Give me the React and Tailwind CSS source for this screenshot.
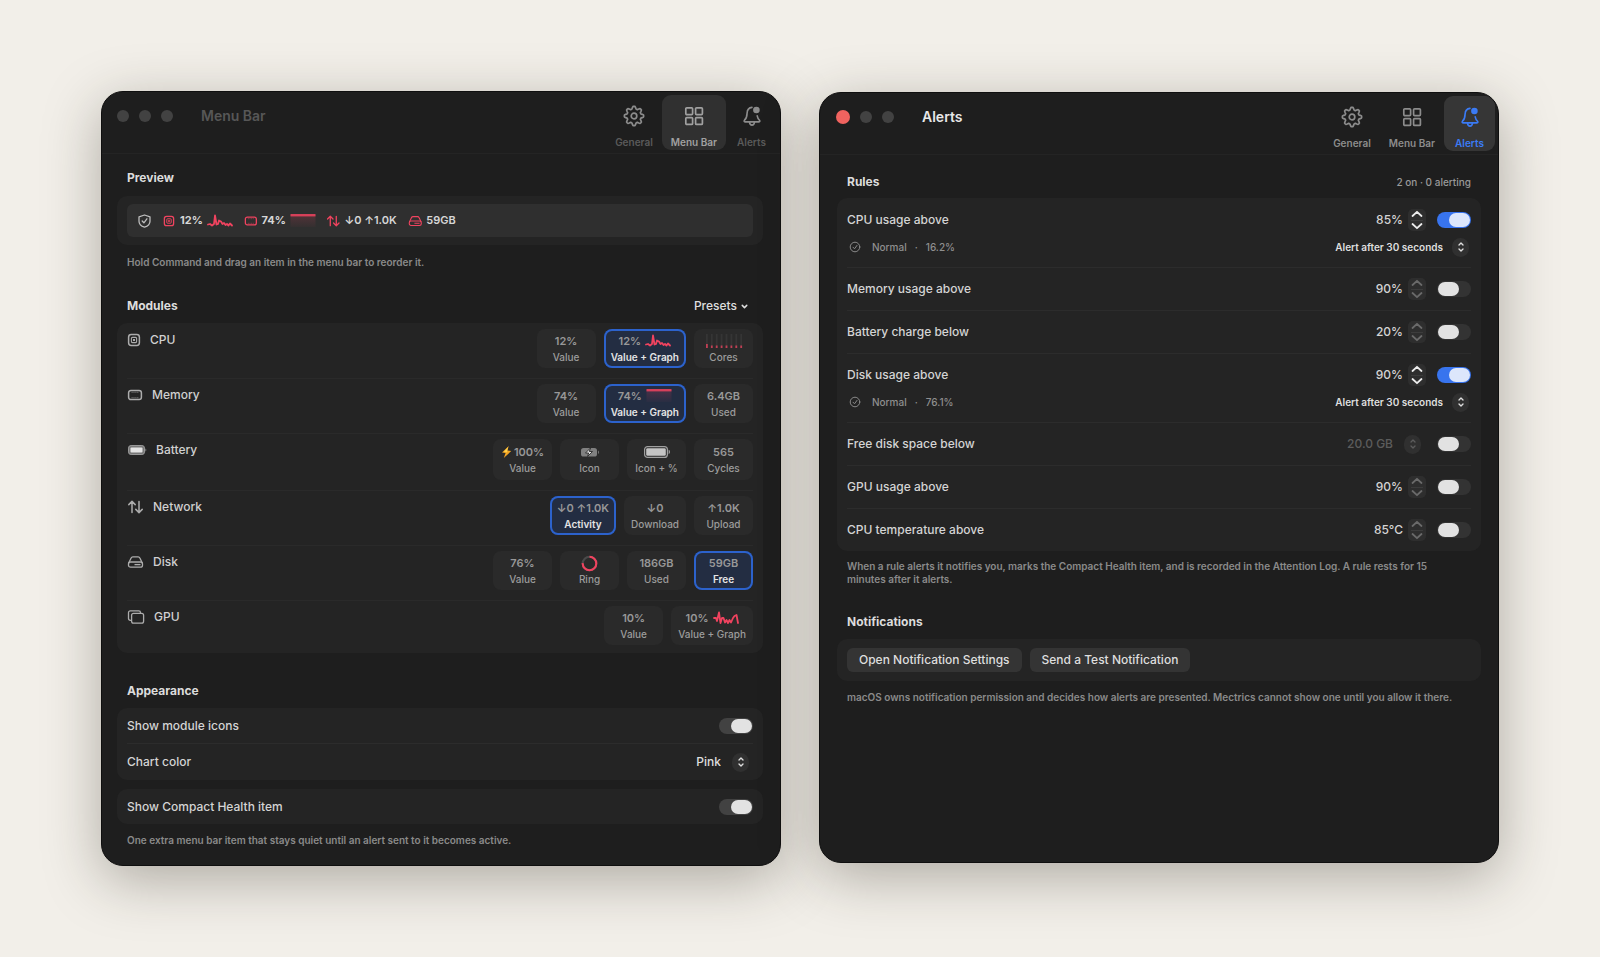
import React, { useState } from "react";
import { ChevronDown, ChevronUp } from "lucide-react";

const PINK = "#f0435f";

const MODULES = [
  {
    name: "CPU",
    icon: "cpu",
    selected: "Value + Graph",
    tiles: [
      { label: "Value", value: "12%" },
      { label: "Value + Graph", value: "12%", art: "spark" },
      { label: "Cores", art: "cores" },
    ],
  },
  {
    name: "Memory",
    icon: "memory",
    selected: "Value + Graph",
    tiles: [
      { label: "Value", value: "74%" },
      { label: "Value + Graph", value: "74%", art: "flat" },
      { label: "Used", value: "6.4GB" },
    ],
  },
  {
    name: "Battery",
    icon: "battery",
    tall: true,
    tiles: [
      { label: "Value", value: "100%", art: "bolt" },
      { label: "Icon", art: "charging" },
      { label: "Icon + %", art: "bigBattery" },
      { label: "Cycles", value: "565" },
    ],
  },
  {
    name: "Network",
    icon: "network",
    selected: "Activity",
    tiles: [
      { label: "Activity", value: "↓0 ↑1.0K" },
      { label: "Download", value: "↓0" },
      { label: "Upload", value: "↑1.0K" },
    ],
  },
  {
    name: "Disk",
    icon: "disk",
    selected: "Free",
    tiles: [
      { label: "Value", value: "76%" },
      { label: "Ring", art: "ring" },
      { label: "Used", value: "186GB" },
      { label: "Free", value: "59GB" },
    ],
  },
  {
    name: "GPU",
    icon: "gpu",
    tiles: [
      { label: "Value", value: "10%" },
      { label: "Value + Graph", value: "10%", art: "gpuSpark" },
    ],
  },
];

const RULES = [
  { name: "CPU usage above", value: "85%", on: true, status: "16.2%" },
  { name: "Memory usage above", value: "90%" },
  { name: "Battery charge below", value: "20%" },
  { name: "Disk usage above", value: "90%", on: true, status: "76.1%" },
  { name: "Free disk space below", value: "20.0 GB", popup: true },
  { name: "GPU usage above", value: "90%" },
  { name: "CPU temperature above", value: "85°C" },
];

/* ---------- icons ---------- */

function GearIcon() {
  const teeth = [];
  for (let i = 0; i < 64; i++) {
    const a = (i / 64) * Math.PI * 2;
    const r = 8.4 + 1.3 * Math.tanh(2.2 * Math.cos(a * 8));
    teeth.push(`${(11 + r * Math.sin(a)).toFixed(2)},${(11 - r * Math.cos(a)).toFixed(2)}`);
  }
  return (
    <svg width="22" height="22" viewBox="0 0 22 22" fill="none" stroke="currentColor" strokeWidth="1.7" strokeLinejoin="round">
      <polygon points={teeth.join(" ")} />
      <circle cx="11" cy="11" r="2.8" />
    </svg>
  );
}

function GridIcon() {
  return (
    <svg width="22" height="22" viewBox="0 0 22 22" fill="none" stroke="currentColor" strokeWidth="1.7">
      <rect x="2.8" y="2.8" width="6.8" height="6.8" rx="1" />
      <rect x="12.6" y="2.8" width="6.8" height="6.8" rx="1" />
      <rect x="2.8" y="12.6" width="6.8" height="6.8" rx="1" />
      <rect x="12.6" y="12.6" width="6.8" height="6.8" rx="1" />
    </svg>
  );
}

function BellIcon() {
  return (
    <svg width="22" height="22" viewBox="0 0 22 22" fill="none" stroke="currentColor" strokeWidth="1.6" strokeLinecap="round" strokeLinejoin="round">
      <path d="M11 2.4c-3 .3-4.8 2.6-4.9 5.7-.1 3.8-.7 5.3-2.6 7.1-.7.8-.4 1.7.5 1.7h14c.9 0 1.2-.9.5-1.7-1.3-1.3-2-2.5-2.3-4.3" />
      <path d="M8.5 17.2c.2 1.8 1.1 2.9 2.5 2.9s2.3-1.1 2.5-2.9" />
      <circle cx="15.4" cy="5" r="3.3" fill="currentColor" stroke="none" />
    </svg>
  );
}

const GLYPHS = {
  cpu: (
    <svg width="14" height="14" viewBox="0 0 14 14" fill="none" stroke="currentColor">
      <rect x="1.6" y="1.6" width="10.8" height="10.8" rx="2.6" strokeWidth="1.5" />
      <rect x="4.4" y="4.4" width="5.2" height="5.2" rx="1" strokeWidth="1.1" />
      <rect x="6" y="6" width="2" height="2" fill="currentColor" stroke="none" />
    </svg>
  ),
  memory: (
    <svg width="16" height="14" viewBox="0 0 16 14" fill="none" stroke="currentColor">
      <rect x="1.6" y="2.4" width="12.8" height="9.2" rx="2.3" strokeWidth="1.5" />
      <path d="M4.5 4.3h7M4.5 9.7h7" strokeWidth="1" strokeDasharray="1.2 0.7" strokeOpacity="0.6" />
    </svg>
  ),
  battery: (
    <svg width="20" height="14" viewBox="0 0 20 14" fill="none">
      <rect x="1.5" y="2.5" width="16" height="9" rx="2.6" fill="#777" stroke="#999" />
      <rect x="3.5" y="4.5" width="12" height="5" rx="1" fill="#e4e4e4" />
      <path d="M18.5 5.5c1 .5 1 2.5 0 3z" fill="#999" />
    </svg>
  ),
  network: (
    <svg width="17" height="14" viewBox="0 0 17 14" fill="none" stroke="currentColor" strokeWidth="1.5" strokeLinecap="round" strokeLinejoin="round">
      <path d="M5 12.5v-11M1.8 4.6 5 1.4l3.2 3.2M12 1.5v11M8.8 9.4l3.2 3.2 3.2-3.2" />
    </svg>
  ),
  disk: (
    <svg width="17" height="14" viewBox="0 0 17 14" fill="none" stroke="currentColor" strokeWidth="1.3" strokeLinejoin="round">
      <path d="M1.6 8.3 4 3.2c.4-.9 1-1.3 1.9-1.3h5.200c.9 0 1.5.4 1.9 1.3l2.4 5.1" />
      <rect x="1.5" y="7" width="14" height="5.2" rx="2" />
      <path d="M7.5 9.6h6" />
    </svg>
  ),
  gpu: (
    <svg width="18" height="14" viewBox="0 0 18 14" fill="none" stroke="currentColor" strokeWidth="1.3">
      <path d="M4.5 10.3H3.3c-1.1 0-1.8-.7-1.8-1.8V2.7c0-1.1.7-1.8 1.8-1.8h8.4c1.1 0 1.8.7 1.8 1.8v.5" />
      <rect x="4.6" y="3.3" width="12" height="9.8" rx="1.9" />
    </svg>
  ),
};

function Shield() {
  return (
    <svg width="13" height="14" viewBox="0 0 13 14" fill="none" stroke="#bcbcbc" strokeWidth="1.3" strokeLinecap="round" strokeLinejoin="round">
      <path d="M6.5 1 12 2.9v4.3c0 2.8-2.3 4.9-5.5 6-3.2-1.1-5.5-3.2-5.5-6V2.9z" />
      <path d="m4.2 7 1.7 1.8 3-4" />
    </svg>
  );
}

function Spark({ points }) {
  return (
    <svg width="26" height="14" viewBox="0 0 26 14" fill="none" stroke={PINK} strokeWidth="1.8" strokeLinecap="round" strokeLinejoin="round">
      <polyline points={points} />
    </svg>
  );
}

const ART = {
  spark: <Spark points="1,10.5 3,10 5,11.5 7,10 8,1.5 9.5,10.5 11,10 12,6.5 14,7.5 15.5,10 17,9 18.5,11 20,10 21.5,11.5 23,9.5 25,11.5" />,
  gpuSpark: <Spark points="1,7 3,7 4,10 6,1.5 7.5,12 9,7 10.5,7 12,11.5 13.5,9 15,12 16.5,9 18,11.5 20,7 21.5,5 23.5,4 25,12" />,
  flat: (
    <svg width="26" height="14" viewBox="0 0 26 14">
      <defs>
        <linearGradient id="flatFade" x1="0" y1="0" x2="0" y2="1">
          <stop offset="0" stopColor={PINK} stopOpacity="0.18" />
          <stop offset="1" stopColor={PINK} stopOpacity="0.03" />
        </linearGradient>
      </defs>
      <rect x="0.5" y="1" width="25" height="12" fill="url(#flatFade)" />
      <rect x="0.5" y="0" width="25" height="2.4" fill={PINK} fillOpacity="0.85" />
    </svg>
  ),
  cores: (
    <svg width="38" height="14" viewBox="0 0 38 14">
      {[0, 1, 2, 3, 4, 5, 6, 7].map((i) => (
        <g key={i}>
          <rect x={1 + i * 4.9} y="0" width="1.8" height="14" fill="#353535" />
          <rect x={1 + i * 4.9} y={i === 0 ? 10 : 11.5} width="1.8" height={i === 0 ? 4 : 2.5} fill={PINK} fillOpacity="0.75" />
        </g>
      ))}
    </svg>
  ),
  bolt: (
    <svg width="11" height="14" viewBox="0 0 11 14">
      <path d="M7.8 1 1 7.6l3.6.5L2.8 13l7.4-7-3.9-.6z" fill="#f5a623" />
      <path d="M7 2 2.8 6.8l3.2.4z" fill="#ffd34d" />
    </svg>
  ),
  charging: (
    <svg width="20" height="14" viewBox="0 0 20 14">
      <rect x="1" y="3" width="16" height="8.5" rx="2.6" fill="#808080" />
      <path d="M18 5.5c1.2.5 1.2 3 0 3.5z" fill="#808080" />
      <path d="M10.5 3 5.5 8h3.2L7.5 11.5l5-5H9.3z" fill="#e4e4e4" stroke="#2b2b2b" strokeWidth="0.9" />
    </svg>
  ),
  bigBattery: (
    <svg width="28" height="14" viewBox="0 0 28 14">
      <rect x="1.6" y="1.6" width="22.8" height="10.8" rx="3" fill="none" stroke="#a0a0a0" strokeWidth="1.2" />
      <rect x="3.2" y="3.2" width="19.6" height="7.6" rx="1.4" fill="#c4c4c4" />
      <path d="M25.6 4.8c1.8.6 1.8 3.8 0 4.4z" fill="#a0a0a0" />
    </svg>
  ),
  ring: (
    <svg width="17" height="17" viewBox="0 0 17 17" fill="none" strokeWidth="2.1">
      <circle cx="8.5" cy="8.5" r="6.8" stroke="#4a4a4a" />
      <circle cx="8.5" cy="8.5" r="6.8" stroke={PINK} pathLength="100" strokeDasharray="76 24" transform="rotate(-90 8.5 8.5)" />
    </svg>
  ),
};

function CheckCircle() {
  return (
    <svg width="12" height="12" viewBox="0 0 12 12" fill="none" stroke="#8a8a8a" strokeLinecap="round" strokeLinejoin="round">
      <circle cx="6" cy="6" r="4.8" />
      <path d="m4 6.2 1.5 1.6L8 4.4" />
    </svg>
  );
}

/* ---------- controls ---------- */

function Toggle({ label, defaultOn, tint }) {
  const [on, setOn] = useState(!!defaultOn);
  const track = on ? (tint ? "bg-[#3874ee]" : "bg-[#424242]") : "bg-[#333333]";
  const knob = on && tint ? "bg-[#dce6fb]" : "bg-[#e2e2e2]";
  return (
    <label className={`flex h-4 w-[34px] shrink-0 items-center rounded-full p-px ${track} ${on ? "justify-end" : "justify-start"}`}>
      <input
        type="checkbox"
        aria-label={label}
        checked={on}
        onChange={(e) => setOn(e.target.checked)}
        className="sr-only"
      />
      <span className={`h-[14px] w-[21px] rounded-full ${knob}`} />
    </label>
  );
}

function Popup({ label, value, small, dim }) {
  return (
    <label className={`relative flex items-center ${dim ? "text-[#5c5c5c]" : "text-[#dedede]"}`}>
      <select
        aria-label={label}
        disabled={dim}
        className={`appearance-none bg-transparent text-right opacity-100 outline-none ${
          small ? "pr-7 text-[10px] font-semibold" : "pr-8 text-[12px] font-medium"
        }`}
      >
        <option>{value}</option>
      </select>
      <span
        className={`pointer-events-none absolute flex h-[19px] w-[17px] flex-col items-center justify-center rounded-full bg-[#303030] ${
          small ? "right-[2px]" : "right-1"
        }`}
      >
        <ChevronUp className="-mb-px size-2" strokeWidth={4} />
        <ChevronDown className="-mt-px size-2" strokeWidth={4} />
      </span>
    </label>
  );
}

function Stepper({ name, active }) {
  return (
    <span
      className={`flex h-[22px] w-[18px] flex-col items-center justify-between rounded-[5px] bg-[#2e2e2e] ${
        active ? "text-[#ececec]" : "text-[#6a6a6a]"
      }`}
    >
      <button aria-label={`Increase ${name}`} className="flex h-[10px] items-center">
        <svg width="12" height="8" viewBox="0 0 12 8" fill="none" stroke="currentColor" strokeWidth="1.8" strokeLinecap="round" strokeLinejoin="round">
          <path d="m1.5 6 4.5-4.2L10.5 6" />
        </svg>
      </button>
      <span className="h-px w-3 bg-[#3c3c3c]" />
      <button aria-label={`Decrease ${name}`} className="flex h-[10px] items-center">
        <svg width="12" height="8" viewBox="0 0 12 8" fill="none" stroke="currentColor" strokeWidth="1.8" strokeLinecap="round" strokeLinejoin="round">
          <path d="m1.5 2 4.5 4.2L10.5 2" />
        </svg>
      </button>
    </span>
  );
}

/* ---------- window chrome ---------- */

const TABS = [
  { name: "General", Icon: GearIcon },
  { name: "Menu Bar", Icon: GridIcon },
  { name: "Alerts", Icon: BellIcon },
];

function Titlebar({ title, focused }) {
  const tabColor = (name) => {
    if (name === title) return focused ? "bg-[#363636] text-[#3b7bf5]" : "bg-[#303030] text-[#a0a0a0]";
    return "text-[#8c8c8c]";
  };
  return (
    <header className={`flex h-[62px] items-start border-b border-[#242424] pr-[3px] ${focused ? "pl-4" : "pl-[15px]"}`}>
      <div className="flex h-12 flex-1 items-center">
        <div className="flex items-center gap-[10px]">
          <button aria-label="Close" className={`rounded-full ${focused ? "size-[14px] bg-[#f0635f]" : "size-3 bg-[#424242]"}`} />
          <button aria-label="Minimize" className="size-3 rounded-full bg-[#424242]" />
          <button aria-label="Zoom" className="size-3 rounded-full bg-[#424242]" />
        </div>
        <h1 className={`ml-7 text-[14px] leading-5 font-semibold ${focused ? "text-[#e8e8e8]" : "text-[#575757]"}`}>{title}</h1>
      </div>
      <nav className="flex pt-[3px]">
        {TABS.map(({ name, Icon }) => (
          <button
            key={name}
            className={`flex h-[55px] min-w-[51px] flex-col items-center gap-[9px] rounded-[9px] px-[9px] pt-[10px] text-[10px] leading-3 font-semibold ${tabColor(name)}`}
          >
            <Icon />
            <span className={!focused && name !== title ? "text-[#5a5a5a]" : ""}>{name}</span>
          </button>
        ))}
      </nav>
    </header>
  );
}

function Window({ children, className }) {
  return (
    <section
      className={`min-w-0 flex-1 overflow-hidden rounded-[22px] border border-[#0f0f0f] bg-[#1e1e1e] shadow-[0_14px_56px_rgba(45,38,25,0.34)] ${className}`}
    >
      {children}
    </section>
  );
}

function Heading({ children }) {
  return <h2 className="text-[12px] leading-5 font-bold text-[#dcdcdc]">{children}</h2>;
}

function Caption({ children, className }) {
  return <p className={`pr-5 pl-[10px] text-[10px] leading-[13px] font-semibold text-[#8a8a8a] ${className}`}>{children}</p>;
}

/* ---------- menu bar window ---------- */

function Tile({ tile, selected, tall }) {
  return (
    <button
      aria-pressed={!!selected}
      className={`flex min-w-[59px] flex-col items-center rounded-lg px-[7px] ${tall ? "h-[41px] pt-[6px]" : "h-[39px] pt-[5px]"} ${
        selected ? "bg-[#232d42] ring-2 ring-[#2c62cc] ring-inset" : "bg-[#2a2a2a]"
      }`}
    >
      <span
        className={`flex h-[14px] items-center text-[11px] leading-[14px] font-semibold text-[#989898] ${
          tile.art === "bolt" ? "flex-row-reverse gap-[2px]" : "gap-1"
        }`}
      >
        {tile.value}
        {ART[tile.art]}
      </span>
      <span className={`mt-[3px] text-[10px] leading-3 ${selected ? "font-semibold text-[#e4e4e4]" : "font-medium text-[#9c9c9c]"}`}>
        {tile.label}
      </span>
    </button>
  );
}

function ModuleRow({ mod, first, last }) {
  const height = mod.tall ? "h-[57px]" : last ? "h-[53px]" : "h-[55px]";
  return (
    <div className={`flex justify-between ${height} ${first ? "pt-[6px]" : "border-t border-[#2a2a2a] pt-[5px]"}`}>
      <div className="flex h-[22px] items-center gap-[9px] text-[12px] leading-5 font-medium text-[#d0d0d0]">
        <span className="text-[#acacac]">{GLYPHS[mod.icon]}</span>
        {mod.name}
      </div>
      <div className="flex gap-2">
        {mod.tiles.map((t) => (
          <Tile key={t.label} tile={t} selected={t.label === mod.selected} tall={mod.tall} />
        ))}
      </div>
    </div>
  );
}

function PreviewGlyph({ name, className }) {
  return <span className={`text-[#f0435f] [&>svg]:h-3 [&>svg]:w-auto ${className}`}>{GLYPHS[name]}</span>;
}

function MenuBarWindow() {
  return (
    <Window className="min-h-[775px]">
      <Titlebar title="Menu Bar" />
      <div className="pr-[17px] pl-[15px]">
        <div className="px-[10px] pt-[14px]">
          <Heading>Preview</Heading>
        </div>
        <div className="mt-2 rounded-[10px] bg-[#242424] px-[10px] py-2">
          <div className="flex h-[33px] items-center rounded-md bg-[#2f2f2f] pl-[11px] text-[11px] font-bold text-[#d6d6d6]">
            <Shield />
            <PreviewGlyph name="cpu" className="ml-3" />
            <span className="ml-[5px]">12%</span>
            <span className="ml-1">{ART.spark}</span>
            <PreviewGlyph name="memory" className="ml-[11px]" />
            <span className="ml-1">74%</span>
            <span className="ml-1">{ART.flat}</span>
            <PreviewGlyph name="network" className="ml-[10px]" />
            <span className="ml-1 font-semibold">↓0 ↑1.0K</span>
            <PreviewGlyph name="disk" className="ml-[11px]" />
            <span className="ml-1 font-semibold">59GB</span>
          </div>
        </div>
        <Caption className="mt-[11px]">Hold Command and drag an item in the menu bar to reorder it.</Caption>

        <div className="mt-[27px] flex items-center justify-between px-[10px]">
          <Heading>Modules</Heading>
          <button className="mr-1 flex items-center gap-[3px] text-[12px] leading-5 font-medium text-[#dedede]">
            Presets
            <ChevronDown className="size-[9px]" strokeWidth={4} />
          </button>
        </div>
        <div className="mt-[7px] rounded-[10px] bg-[#242424] px-[10px]">
          {MODULES.map((m, i) => (
            <ModuleRow key={m.name} mod={m} first={i === 0} last={i === MODULES.length - 1} />
          ))}
        </div>

        <div className="px-[10px] pt-7">
          <Heading>Appearance</Heading>
        </div>
        <div className="mt-[7px] rounded-[10px] bg-[#242424] px-[10px] text-[12px] font-medium text-[#d4d4d4]">
          <div className="flex h-[35px] items-center justify-between">
            Show module icons
            <Toggle label="Show module icons" defaultOn />
          </div>
          <div className="flex h-[37px] items-center justify-between border-t border-[#2c2c2c]">
            Chart color
            <Popup label="Chart color" value="Pink" />
          </div>
        </div>
        <div className="mt-[9px] flex h-[35px] items-center justify-between rounded-[10px] bg-[#242424] px-[10px] text-[12px] font-medium text-[#d4d4d4]">
          Show Compact Health item
          <Toggle label="Show Compact Health item" defaultOn />
        </div>
        <Caption className="mt-[10px]">One extra menu bar item that stays quiet until an alert sent to it becomes active.</Caption>
      </div>
    </Window>
  );
}

/* ---------- alerts window ---------- */

function RuleRow({ rule, first }) {
  return (
    <div className={`border-t ${first ? "border-transparent" : "border-[#2c2c2c]"} ${rule.on ? "h-[69px]" : "h-[43px]"}`}>
      <div className="flex h-[42px] items-center">
        <span className="flex-1">{rule.name}</span>
        {rule.popup ? (
          <span className="mr-3">
            <Popup label={rule.name} value={rule.value} dim />
          </span>
        ) : (
          <>
            <span className="mr-[5px]">{rule.value}</span>
            <span className="mr-[11px]">
              <Stepper name={rule.name} active={rule.on} />
            </span>
          </>
        )}
        <Toggle label={rule.name} defaultOn={rule.on} tint />
      </div>
      {rule.on && (
        <div className="-mt-1 flex h-5 items-center justify-between pl-[2px] text-[10px] text-[#8f8f8f]">
          <span className="flex items-center">
            <CheckCircle />
            <span className="ml-[11px]">Normal</span>
            <span className="mx-2">·</span>
            <span>{rule.status}</span>
          </span>
          <Popup label={`${rule.name} delay`} value="Alert after 30 seconds" small />
        </div>
      )}
    </div>
  );
}

function AlertsWindow() {
  return (
    <Window className="mt-px min-h-[771px]">
      <Titlebar title="Alerts" focused />
      <div className="px-[17px]">
        <div className="flex items-center justify-between px-[10px] pt-[17px]">
          <Heading>Rules</Heading>
          <span className="text-[10px] font-medium text-[#9a9a9a]">2 on · 0 alerting</span>
        </div>
        <div className="mt-[6px] rounded-[10px] bg-[#242424] px-[10px] text-[12px] font-medium text-[#d4d4d4]">
          {RULES.map((r, i) => (
            <RuleRow key={r.name} rule={r} first={i === 0} />
          ))}
        </div>
        <Caption className="mt-[9px]">
          When a rule alerts it notifies you, marks the Compact Health item, and is recorded in the Attention Log. A rule rests for 15
          minutes after it alerts.
        </Caption>

        <div className="px-[10px] pt-[26px]">
          <Heading>Notifications</Heading>
        </div>
        <div className="mt-[7px] flex gap-2 rounded-[10px] bg-[#242424] px-[10px] py-[9px] text-[12px] font-medium text-[#dedede]">
          <button className="h-6 rounded-md bg-[#343434] px-3">Open Notification Settings</button>
          <button className="h-6 rounded-md bg-[#343434] px-3">Send a Test Notification</button>
        </div>
        <Caption className="mt-[10px]">
          macOS owns notification permission and decides how alerts are presented. Mectrics cannot show one until you allow it there.
        </Caption>
      </div>
    </Window>
  );
}

export default function App() {
  return (
    <main className="flex min-h-screen items-start gap-[38px] bg-[#f2efe9] px-[101px] py-[91px] font-['Inter',sans-serif] antialiased">
      <MenuBarWindow />
      <AlertsWindow />
    </main>
  );
}
